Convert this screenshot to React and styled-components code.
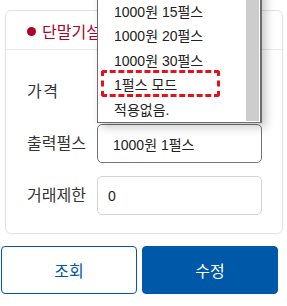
import React from 'react'
import styled, { createGlobalStyle } from 'styled-components'

const GlobalStyle = createGlobalStyle`
  html, body {
    margin: 0;
    padding: 0;
    background: #fff;
  }
  body {
    font-family: "Noto Sans CJK KR", "Noto Sans", sans-serif;
    color: #333;
  }
`

const Page = styled.div`
  width: 287px;
  padding-top: 10px;
`

const Card = styled.div`
  margin: 0 4px 0 5px;
  border: 1px solid #e2e2e2;
  border-radius: 6px;
  background: #fff;
`

const CardHeader = styled.div`
  display: flex;
  align-items: center;
  gap: 6px;
  height: 39px;
  padding: 2px 0 0 21px;
  box-sizing: border-box;
  border-bottom: 1px solid #ebebeb;
  color: #b0002a;
  font-size: 16px;
  white-space: nowrap;
  overflow: hidden;
`

const Dot = styled.span`
  width: 9px;
  height: 9px;
  border-radius: 50%;
  background: #b0002a;
  flex: none;
`

const CardBody = styled.div`
  display: flex;
  flex-direction: column;
  gap: 13px;
  padding: 22px 20px 18px 21px;
`

const Row = styled.div`
  display: flex;
  align-items: center;
`

const Label = styled.div`
  width: 70px;
  flex: none;
  font-size: 16px;
  color: #333;
  margin-top: -3px;
  letter-spacing: ${p => p.$wide ? '1.5px' : '0'};
`

const FieldWrap = styled.div`
  position: relative;
  flex: 1;
`

const Box = styled.div`
  height: 39px;
  box-sizing: border-box;
  display: flex;
  align-items: center;
  padding-left: ${p => p.$pad || 15}px;
  border: 1px solid ${p => p.$dark ? '#747474' : '#d4d4d4'};
  border-radius: 5px;
  font-family: "Liberation Sans", "Noto Sans CJK KR", sans-serif;
  font-size: 14px;
  color: #222;
  background: #fff;
`

const DropList = styled.div`
  position: absolute;
  left: 0;
  right: 0;
  bottom: calc(100% + 1px);
  z-index: 10;
  display: grid;
  grid-template-columns: 1fr 13px;
  padding: 0 1px 1px 0;
  border: 1px solid #6c6c6c;
  border-right-width: 2px;
  background: #fff;
  box-shadow: 4px 4px 9px rgba(0, 0, 0, 0.22);
`

const Items = styled.ul`
  list-style: none;
  margin: 0;
  padding: 24px 0 0;
`

const Item = styled.li`
  position: relative;
  height: 24.5px;
  display: flex;
  align-items: center;
  padding-left: 16px;
  font-family: "Liberation Sans", "Noto Sans CJK KR", sans-serif;
  font-size: 14px;
  color: #222;
  white-space: nowrap;

  &::after {
    content: '';
    display: ${p => p.$marked ? 'block' : 'none'};
    position: absolute;
    left: 3px;
    width: 119px;
    top: -2px;
    bottom: 0;
    border: 3px dashed #e3121c;
    border-radius: 3px;
    box-sizing: border-box;
  }
`

const Scrollbar = styled.div`
  background: #cdcdcd;
`

const ButtonRow = styled.div`
  display: flex;
  gap: 5px;
  padding: 12px 9px 0 1px;
`

const Button = styled.button`
  flex: 1;
  height: 48px;
  border-radius: 4px;
  border: 1px solid #0058a8;
  background: ${p => p.$solid ? '#0058a8' : '#fff'};
  color: ${p => p.$solid ? '#fff' : '#0058a8'};
  font-family: "Noto Sans CJK KR", sans-serif;
  font-size: 16px;
  cursor: pointer;
`

const options = [
  { label: '1000원 15펄스' },
  { label: '1000원 20펄스' },
  { label: '1000원 30펄스' },
  { label: '1펄스 모드', marked: true },
  { label: '적용없음.' },
]

export default function App() {
  return (
    <Page>
      <GlobalStyle />
      <Card>
        <CardHeader><Dot />단말기설정</CardHeader>
        <CardBody>
          <Row>
            <Label $wide>가격</Label>
            <FieldWrap><Box $dark /></FieldWrap>
          </Row>
          <Row>
            <Label>출력펄스</Label>
            <FieldWrap>
              <Box $dark>1000원 1펄스</Box>
              <DropList>
                <Items>
                  {options.map(o => (
                    <Item key={o.label} $marked={o.marked}>{o.label}</Item>
                  ))}
                </Items>
                <Scrollbar />
              </DropList>
            </FieldWrap>
          </Row>
          <Row>
            <Label>거래제한</Label>
            <FieldWrap><Box $pad={10}>0</Box></FieldWrap>
          </Row>
        </CardBody>
      </Card>
      <ButtonRow>
        <Button>조회</Button>
        <Button $solid>수정</Button>
      </ButtonRow>
    </Page>
  )
}
